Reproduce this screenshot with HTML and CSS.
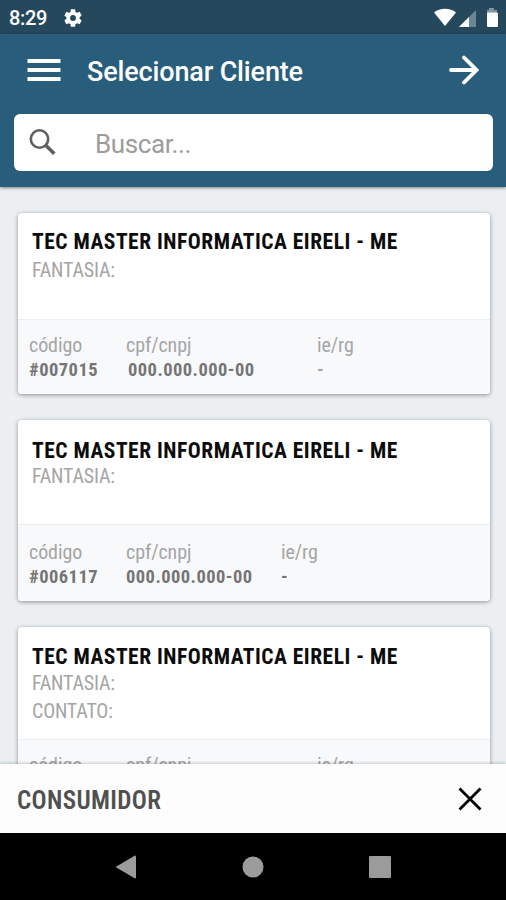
FILE: index.html
```html
<!DOCTYPE html>
<html lang="pt-BR">
<head>
    <meta charset="UTF-8">
    <meta name="viewport" content="width=device-width, initial-scale=1.0">
    <title>Selecionar Cliente</title>
    <link rel="stylesheet" href="styles.css">
</head>
<body>
    <div class="app">
        <div class="status-bar">
            <span class="clock">8:29</span>
            <svg class="gear" width="22" height="22" viewBox="0 0 24 24"><path fill="#fff" d="M19.14 12.94c.04-.3.06-.61.06-.94 0-.32-.02-.64-.07-.94l2.03-1.58c.18-.14.23-.41.12-.61l-1.92-3.32c-.12-.22-.37-.29-.59-.22l-2.39.96c-.5-.38-1.03-.7-1.62-.94l-.36-2.54c-.04-.24-.24-.41-.48-.41h-3.84c-.24 0-.43.17-.47.41l-.36 2.54c-.59.24-1.13.57-1.62.94l-2.39-.96c-.22-.08-.47 0-.59.22L2.74 8.87c-.12.21-.08.47.12.61l2.03 1.58c-.05.3-.09.63-.09.94s.02.64.07.94l-2.03 1.58c-.18.14-.23.41-.12.61l1.92 3.32c.12.22.37.29.59.22l2.39-.96c.5.38 1.03.7 1.62.94l.36 2.54c.05.24.24.41.48.41h3.84c.24 0 .44-.17.47-.41l.36-2.54c.59-.24 1.13-.56 1.62-.94l2.39.96c.22.08.47 0 .59-.22l1.92-3.32c.12-.22.07-.47-.12-.61l-2.01-1.58zM12 15.2a3.2 3.2 0 1 1 0-6.4 3.2 3.2 0 0 1 0 6.4z"/></svg>
            <svg class="signals" width="66" height="20" viewBox="0 0 66 20">
                <path fill="#fff" d="M1 4.500C7-.5 17-.5 23 4.500L12 18z"/>
                <path fill="#6d8494" d="M43 2v17H26z"/>
                <path fill="#fff" d="M36 9v10H26z"/>
                <path fill="#8195a3" d="M56 0h5v2h3v3H54V2h2z"/>
                <rect x="54" y="4.500" width="11" height="14.500" rx="1" fill="#fff"/>
            </svg>
        </div>

        <header class="header">
            <div class="toolbar">
                <svg width="34" height="24" viewBox="0 0 34 24"><path fill="none" stroke="#fff" stroke-width="3.800" d="M.5 3h33M.5 12h33M.5 21h33"/></svg>
                <h1>Selecionar Cliente</h1>
                <svg class="next" width="30" height="30" viewBox="0 0 30 30"><path fill="none" stroke="#fff" stroke-width="3.800" stroke-linecap="round" d="M2 15h25M15 2.500 27.500 15 15 27.500"/></svg>
            </div>
            <div class="search">
                <svg width="27" height="27" viewBox="0 0 27 27"><g fill="none" stroke="#5f5f5f"><circle cx="10.500" cy="10" r="8.700" stroke-width="2.600"/><path stroke-width="3.600" d="m16.700 16.200 8.600 8.600"/></g></svg>
                <span>Buscar...</span>
            </div>
        </header>

        <main class="list">
            <div class="card first">
                <div class="card-top">
                    <h2>TEC MASTER INFORMATICA EIRELI - ME</h2>
                    <p>FANTASIA:</p>
                </div>
                <div class="card-info">
                    <div class="col code"><span>código</span><b>#007015</b></div>
                    <div class="col doc wide"><span>cpf/cnpj</span><b>000.000.000-00</b></div>
                    <div class="col"><span>ie/rg</span><b class="light">-</b></div>
                </div>
            </div>

            <div class="card second">
                <div class="card-top">
                    <h2>TEC MASTER INFORMATICA EIRELI - ME</h2>
                    <p>FANTASIA:</p>
                </div>
                <div class="card-info">
                    <div class="col code"><span>código</span><b>#006117</b></div>
                    <div class="col doc"><span>cpf/cnpj</span><b>000.000.000-00</b></div>
                    <div class="col"><span>ie/rg</span><b>-</b></div>
                </div>
            </div>

            <div class="card third">
                <div class="card-top">
                    <h2>TEC MASTER INFORMATICA EIRELI - ME</h2>
                    <p>FANTASIA:</p>
                    <p>CONTATO:</p>
                </div>
                <div class="card-info">
                    <div class="col code"><span>código</span></div>
                    <div class="col doc wide"><span>cpf/cnpj</span></div>
                    <div class="col"><span>ie/rg</span></div>
                </div>
            </div>
        </main>

        <div class="bottom-bar">
            <span>CONSUMIDOR</span>
            <svg width="24" height="24" viewBox="0 0 24 24"><path fill="none" stroke="#000" stroke-width="2.800" d="m1.500 1.500 21 21m0-21-21 21"/></svg>
        </div>

        <nav class="nav-bar">
            <svg width="22" height="24" viewBox="0 0 22 24"><path fill="#9b9b9b" d="M20 .5q1 0 1 1v21q0 1-1 1L.5 12z"/></svg>
            <svg width="22" height="22" viewBox="0 0 22 22"><circle cx="11" cy="11" r="10.500" fill="#9b9b9b"/></svg>
            <svg width="22" height="22" viewBox="0 0 22 22"><rect width="22" height="22" rx="1" fill="#9b9b9b"/></svg>
        </nav>
    </div>
</body>
</html>
```
FILE: styles.css
```css
* {
    box-sizing: border-box;
}
body {
    margin: 0;
    font-family: Roboto, sans-serif;
    background-color: #ebeff2;
}
svg {
    display: block;
    flex-shrink: 0;
}
h1, h2, p {
    margin: 0;
}
.app {
    display: flex;
    flex-direction: column;
    height: 900px;
    width: 506px;
    overflow: hidden;
}
.status-bar {
    height: 34px;
    flex-shrink: 0;
    display: flex;
    align-items: center;
    padding: 1px 7px 0 9px;
    background-color: #26485d;
    color: #fff;
}
.clock {
    width: 53px;
    font-size: 20px;
    font-weight: 500;
    letter-spacing: -0.3px;
}
.signals {
    margin-left: auto;
}
.header {
    height: 153px;
    flex-shrink: 0;
    padding: 0 13px 0 14px;
    background-color: #285d7b;
    box-shadow: 0 1px 3px rgba(0, 0, 0, 0.45);
    z-index: 1;
}
.toolbar {
    height: 80px;
    display: flex;
    align-items: center;
    padding: 0 14px 9px 13px;
}
.toolbar h1 {
    margin: 5px 0 0 26px;
    font-size: 27px;
    font-weight: 500;
    letter-spacing: -0.15px;
    color: #fff;
    white-space: nowrap;
    font-stretch: 90%;
}
.next {
    margin-left: auto;
}
.search {
    height: 57px;
    display: flex;
    align-items: center;
    padding-left: 15px;
    gap: 39px;
    background-color: #fff;
    border-radius: 6px;
    font-size: 26px;
    letter-spacing: -0.4px;
    color: #9c9c9c;
}
.search span {
    padding-top: 2px;
}
.list {
    flex: 1;
    min-height: 0;
    overflow: hidden;
    padding: 26px 16px 0 18px;
    font-family: "Roboto Condensed", Roboto, sans-serif;
    font-stretch: 75%;
}
.card {
    height: 181px;
    margin-bottom: 26px;
    display: flex;
    flex-direction: column;
    background-color: #fff;
    border-radius: 4px;
    overflow: hidden;
    box-shadow: 0 1px 4px rgba(0, 0, 0, 0.4);
}
.card-top {
    height: 106px;
    flex-shrink: 0;
    padding: 15px 14px 0;
}
.card h2 {
    font-size: 21.5px;
    line-height: 28px;
    font-weight: 700;
    letter-spacing: 0.51px;
    color: #0c0c0c;
    white-space: nowrap;
}
.card p {
    font-size: 20px;
    line-height: 28px;
    letter-spacing: -0.2px;
    color: #a5a5a5;
}
.card-info {
    flex: 1;
    display: flex;
    padding: 13px 11px 0;
    background-color: #f8f9fb;
    border-top: 1px solid #ebedee;
}
.second .card-top {
    height: 104px;
    padding-top: 18px;
}
.second .card-info {
    padding-top: 15px;
}
.second h2, .third h2 {
    line-height: 26px;
}
.second p {
    line-height: 25px;
}
.third .card-top {
    height: 112px;
    padding-top: 17px;
}
.third p:nth-of-type(1) {
    line-height: 27px;
}
.col {
    display: flex;
    flex-direction: column;
    font-size: 20px;
    line-height: 25px;
    letter-spacing: -0.1px;
    color: #a5a5a5;
}
.col b {
    font-size: 18.5px;
    letter-spacing: 0.45px;
    color: #757575;
    white-space: nowrap;
}
.col b.light {
    color: #a5a5a5;
}
.code {
    width: 97px;
}
.doc {
    width: 155px;
}
.wide {
    width: 191px;
}
.first .wide b {
    padding-left: 2px;
}
.bottom-bar {
    height: 69px;
    flex-shrink: 0;
    display: flex;
    align-items: center;
    justify-content: space-between;
    padding: 1px 24px 0 17px;
    background-color: #fdfdfd;
    box-shadow: 0 -1px 3px rgba(0, 0, 0, 0.2);
    z-index: 1;
    font-family: "Roboto Condensed", Roboto, sans-serif;
    font-stretch: 75%;
    font-size: 25px;
    font-weight: 600;
    letter-spacing: 0.35px;
    color: #505050;
}
.bottom-bar span {
    padding-top: 2px;
}
.nav-bar {
    height: 67px;
    flex-shrink: 0;
    display: flex;
    align-items: center;
    gap: 105px;
    padding-left: 115px;
    background-color: #000;
    z-index: 1;
}
```
